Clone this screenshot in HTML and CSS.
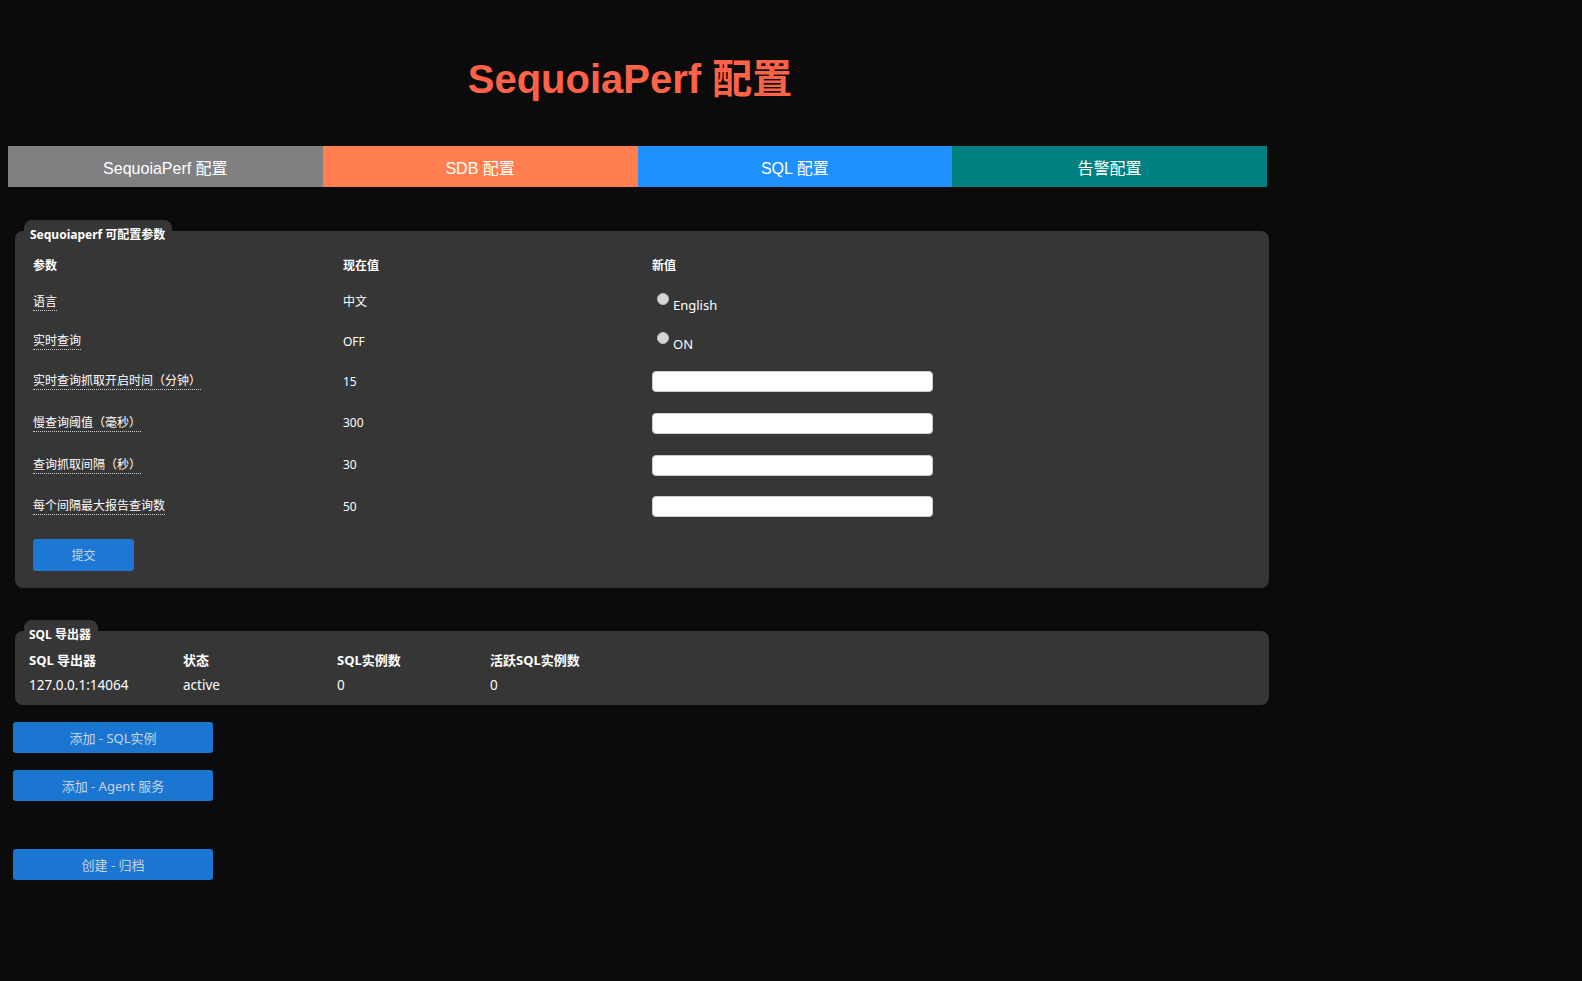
FILE: index.html
```html
<!DOCTYPE html>
<html lang="zh">
<head>
<meta charset="utf-8">
<title>SequoiaPerf 配置</title>
<link rel="stylesheet" href="styles.css">
</head>
<body>
<h1 class="title">SequoiaPerf 配置</h1>
<nav class="tabs">
  <div class="tab tab-gray">SequoiaPerf 配置</div>
  <div class="tab tab-coral">SDB 配置</div>
  <div class="tab tab-blue">SQL 配置</div>
  <div class="tab tab-teal">告警配置</div>
</nav>

<section class="group group-params">
  <div class="legend">Sequoiaperf 可配置参数</div>
  <div class="panel panel-params">
    <div class="param-grid">
      <div class="cell th">参数</div>
      <div class="cell th">现在值</div>
      <div class="cell th">新值</div>

      <div class="cell"><span class="lbl">语言</span></div>
      <div class="cell">中文</div>
      <div class="cell"><label class="radio"><input type="radio" name="lang"><span>English</span></label></div>

      <div class="cell"><span class="lbl">实时查询</span></div>
      <div class="cell">OFF</div>
      <div class="cell"><label class="radio"><input type="radio" name="rt"><span>ON</span></label></div>

      <div class="cell"><span class="lbl">实时查询抓取开启时间（分钟）</span></div>
      <div class="cell">15</div>
      <div class="cell"><input class="txt" type="text"></div>

      <div class="cell"><span class="lbl">慢查询阈值（毫秒）</span></div>
      <div class="cell">300</div>
      <div class="cell"><input class="txt" type="text"></div>

      <div class="cell"><span class="lbl">查询抓取间隔（秒）</span></div>
      <div class="cell">30</div>
      <div class="cell"><input class="txt" type="text"></div>

      <div class="cell"><span class="lbl">每个间隔最大报告查询数</span></div>
      <div class="cell">50</div>
      <div class="cell"><input class="txt" type="text"></div>
    </div>
    <button class="btn btn-submit">提交</button>
  </div>
</section>

<section class="group group-sql">
  <div class="legend">SQL 导出器</div>
  <div class="panel panel-sql">
    <div class="sql-grid">
      <div class="cell th">SQL 导出器</div>
      <div class="cell th">状态</div>
      <div class="cell th">SQL实例数</div>
      <div class="cell th">活跃SQL实例数</div>
      <div class="cell">127.0.0.1:14064</div>
      <div class="cell">active</div>
      <div class="cell">0</div>
      <div class="cell">0</div>
    </div>
  </div>
</section>

<div class="actions">
  <button class="btn btn-wide">添加 - SQL实例</button>
  <button class="btn btn-wide">添加 - Agent 服务</button>
  <button class="btn btn-wide btn-far">创建 - 归档</button>
</div>
</body>
</html>
```

FILE: styles.css
```css
html, body {
  background: #0b0b0b;
}
body {
  margin: 8px;
  color: #ffffff;
  font-family: "Noto Sans", "Noto Sans CJK SC", sans-serif;
}

.title {
  width: 1244px;
  margin: 48px 0 44px 0;
  text-align: center;
  font-family: "Liberation Sans", "Noto Sans CJK SC", sans-serif;
  font-size: 40px;
  font-weight: bold;
  line-height: 46px;
  color: #ff6347;
}

.tabs {
  display: flex;
  width: 1259px;
  height: 41px;
}
.tab {
  flex: 1 1 0;
  display: flex;
  align-items: center;
  justify-content: center;
  font-family: "Liberation Sans", "Noto Sans CJK SC", sans-serif;
  font-size: 16px;
  color: #ffffff;
}
.tab-gray { background: #808080; }
.tab-coral { background: #ff7f50; }
.tab-blue { background: #1e90ff; }
.tab-teal { background: #008080; }

.group-params { margin-top: 33px; }
.group-sql { margin-top: 32px; }

.legend {
  position: relative;
  z-index: 1;
  display: block;
  width: max-content;
  box-sizing: border-box;
  height: 22px;
  margin: 0 0 -11px 16px;
  padding: 8px 7px 0 6px;
  background: #363636;
  border-radius: 8px 8px 0 0;
  font-size: 12px;
  font-weight: bold;
  line-height: 14px;
}
.group-sql .legend {
  padding-left: 5px;
}

.panel {
  margin-left: 7px;
  width: 1254px;
  box-sizing: border-box;
  background: #363636;
  border-radius: 8px;
}
.panel-params {
  padding: 19px 18px 17px 18px;
}
.param-grid {
  display: grid;
  grid-template-columns: 310px 309px 1fr;
  grid-template-rows: 32px 40px 39px 41px 42px 42px 41px;
  font-size: 12px;
}
.cell {
  display: flex;
  align-items: center;
  line-height: 16px;
}
.th {
  font-weight: bold;
}
.lbl {
  display: inline-block;
  line-height: 15px;
  padding-bottom: 1px;
  border-bottom: 1px dotted #cfcfcf;
}

.radio {
  display: flex;
  align-items: flex-start;
  font-size: 13px;
  line-height: 18px;
  padding-top: 2px;
}
.radio input {
  appearance: none;
  -webkit-appearance: none;
  width: 12px;
  height: 12px;
  margin: 0 4px 0 5px;
  border-radius: 50%;
  background: #d6d6d6;
  border: 1px solid #bdbdbd;
  box-sizing: border-box;
}
.radio span {
  margin-top: 3px;
}

.txt {
  box-sizing: border-box;
  width: 281px;
  height: 21px;
  margin: 0;
  padding: 0 4px;
  background: #ffffff;
  border: 1px solid #cccccc;
  border-radius: 4px;
  outline: none;
}

.btn {
  display: block;
  box-sizing: border-box;
  border: none;
  border-radius: 3px;
  background: #1c78d4;
  color: #c8d4e0;
  font-family: "Noto Sans", "Noto Sans CJK SC", sans-serif;
  font-size: 13px;
  padding: 0;
}
.btn-submit {
  margin-top: 12px;
  width: 101px;
  height: 32px;
  font-size: 12px;
}

.panel-sql {
  padding: 17px 14px 7px 14px;
}
.sql-grid {
  display: grid;
  grid-template-columns: 154px 154px 153px 1fr;
  grid-template-rows: 24px 26px;
  font-size: 13px;
}
.sql-grid .cell:not(.th) {
  font-size: 13.5px;
}

.actions {
  margin: 17px 0 0 5px;
}
.btn-wide {
  width: 200px;
  height: 31px;
  margin-bottom: 17px;
  background: #1a76d1;
}
.btn-far {
  margin-top: 48px;
}
```
